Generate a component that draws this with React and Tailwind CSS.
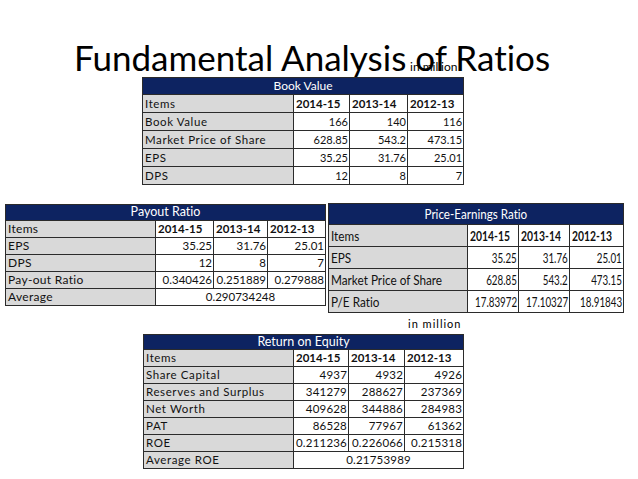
import React from "react";

const years = ["2014-15", "2013-14", "2012-13"];

function C({ cls, align, span, children, colSpan }) {
  const justify = align === "r" ? "justify-end" : align === "c" ? "justify-center" : "justify-start";
  const origin = align === "r" ? "origin-right" : align === "c" ? "origin-center" : "origin-left";
  return (
    <td colSpan={colSpan} className={`border border-[#2b2b2b] p-0 whitespace-nowrap overflow-hidden leading-none ${cls}`}>
      <div className={`flex ${justify}`}>
        <span className={`block shrink-0 ${origin} ${span}`}>{children}</span>
      </div>
    </td>
  );
}

function T({ wrap, cols, titleText, titleCls, titleSpan, headH, rowH, label, labelSpan, num, numSpan, year, yearSpan, rows, avg }) {
  return (
    <table className={`table-fixed border-collapse shrink-0 ${wrap}`}>
      <colgroup>
        {cols.map((c, i) => (
          <col key={i} className={c} />
        ))}
      </colgroup>
      <tbody>
        <tr>
          <C colSpan={4} align="c" span={titleSpan} cls={`${headH} bg-[#0d2361] text-white ${titleCls}`}>
            {titleText}
          </C>
        </tr>
        <tr>
          <C align="l" span={labelSpan} cls={`${rowH} bg-[#d9d9d9] pl-[2px] ${label}`}>
            Items
          </C>
          {years.map((y) => (
            <C key={y} align="l" span={yearSpan} cls={`${rowH} bg-white pl-[2px] font-bold ${year}`}>
              {y}
            </C>
          ))}
        </tr>
        {rows.map((r) => (
          <tr key={r[0]}>
            <C align="l" span={labelSpan} cls={`${rowH} bg-[#d9d9d9] pl-[2px] ${label}`}>
              {r[0]}
            </C>
            {r.slice(1).map((v, i) => (
              <C key={i} align="r" span={numSpan} cls={`${rowH} bg-white pr-[1px] ${num}`}>
                {v}
              </C>
            ))}
          </tr>
        ))}
        {avg && (
          <tr>
            <C align="l" span={labelSpan} cls={`${rowH} bg-[#d9d9d9] pl-[2px] ${label}`}>
              {avg[0]}
            </C>
            <C colSpan={3} align="c" span={numSpan} cls={`${rowH} bg-white ${num}`}>
              {avg[1]}
            </C>
          </tr>
        )}
      </tbody>
    </table>
  );
}

export default function App() {
  return (
    <div className="w-[638px] h-[479px] bg-white overflow-hidden font-['Lato',sans-serif] text-[#111] flex flex-col [font-variant-ligatures:none]">
      <div className="relative h-[77px] shrink-0 pt-[40px] pl-[74px]">
        <h1 className="text-[35px] leading-[35px] whitespace-nowrap text-black">Fundamental Analysis of Ratios</h1>
        <span className="absolute left-[410px] top-[61px] text-[12px] leading-[12px] text-black">in million</span>
      </div>

      <T
        wrap="ml-[142px] w-[321px]"
        cols={["w-[151px]", "w-[56px]", "w-[58px]", "w-[56px]"]}
        titleText="Book Value"
        titleCls="text-[12px]"
        titleSpan=""
        headH="h-[17px]"
        rowH="h-[18px]"
        label="text-[11.5px] tracking-[0.6px]"
        labelSpan=""
        num="text-[11px]"
        numSpan=""
        year="text-[11.5px]"
        yearSpan=""
        rows={[
          ["Book Value", "166", "140", "116"],
          ["Market Price of Share", "628.85", "543.2", "473.15"],
          ["EPS", "35.25", "31.76", "25.01"],
          ["DPS", "12", "8", "7"],
        ]}
      />

      <div className="flex items-start mt-[18px] shrink-0">
        <T
          wrap="ml-[5px] mt-[1px] w-[320px]"
          cols={["w-[150px]", "w-[58px]", "w-[54px]", "w-[58px]"]}
          titleText="Payout Ratio"
          titleCls="text-[12.5px]"
          titleSpan=""
          headH="h-[16px]"
          rowH="h-[17px]"
          label="text-[12px] tracking-[0.3px]"
          labelSpan=""
          num="text-[11.5px]"
          numSpan=""
          year="text-[11.5px]"
          yearSpan=""
          rows={[
            ["EPS", "35.25", "31.76", "25.01"],
            ["DPS", "12", "8", "7"],
            ["Pay-out Ratio", "0.340426", "0.251889", "0.279888"],
          ]}
          avg={["Average", "0.290734248"]}
        />
        <T
          wrap="ml-[2px] w-[295px]"
          cols={["w-[139px]", "w-[51px]", "w-[51px]", "w-[54px]"]}
          titleText="Price-Earnings Ratio"
          titleCls="text-[14px]"
          titleSpan="scale-x-[0.83]"
          headH="h-[21px]"
          rowH="h-[22px]"
          label="text-[14px]"
          labelSpan="scale-x-[0.84]"
          num="text-[14px]"
          numSpan="scale-x-[0.7]"
          year="text-[14px]"
          yearSpan="scale-x-[0.74]"
          rows={[
            ["EPS", "35.25", "31.76", "25.01"],
            ["Market Price of Share", "628.85", "543.2", "473.15"],
            ["P/E Ratio", "17.83972", "17.10327", "18.91843"],
          ]}
        />
      </div>

      <div className="h-[21px] shrink-0 pl-[408px] text-[11px] tracking-[1px] leading-[21px] text-black">in million</div>

      <T
        wrap="ml-[143px] w-[320px]"
        cols={["w-[150px]", "w-[55px]", "w-[56px]", "w-[59px]"]}
        titleText="Return on Equity"
        titleCls="text-[12.5px]"
        titleSpan=""
        headH="h-[15px]"
        rowH="h-[17px]"
        label="text-[11.5px] tracking-[0.6px]"
        labelSpan=""
        num="text-[11.5px] tracking-[0.2px]"
        numSpan=""
        year="text-[11.5px]"
        yearSpan=""
        rows={[
          ["Share Capital", "4937", "4932", "4926"],
          ["Reserves and Surplus", "341279", "288627", "237369"],
          ["Net Worth", "409628", "344886", "284983"],
          ["PAT", "86528", "77967", "61362"],
          ["ROE", "0.211236", "0.226066", "0.215318"],
        ]}
        avg={["Average ROE", "0.21753989"]}
      />
    </div>
  );
}
